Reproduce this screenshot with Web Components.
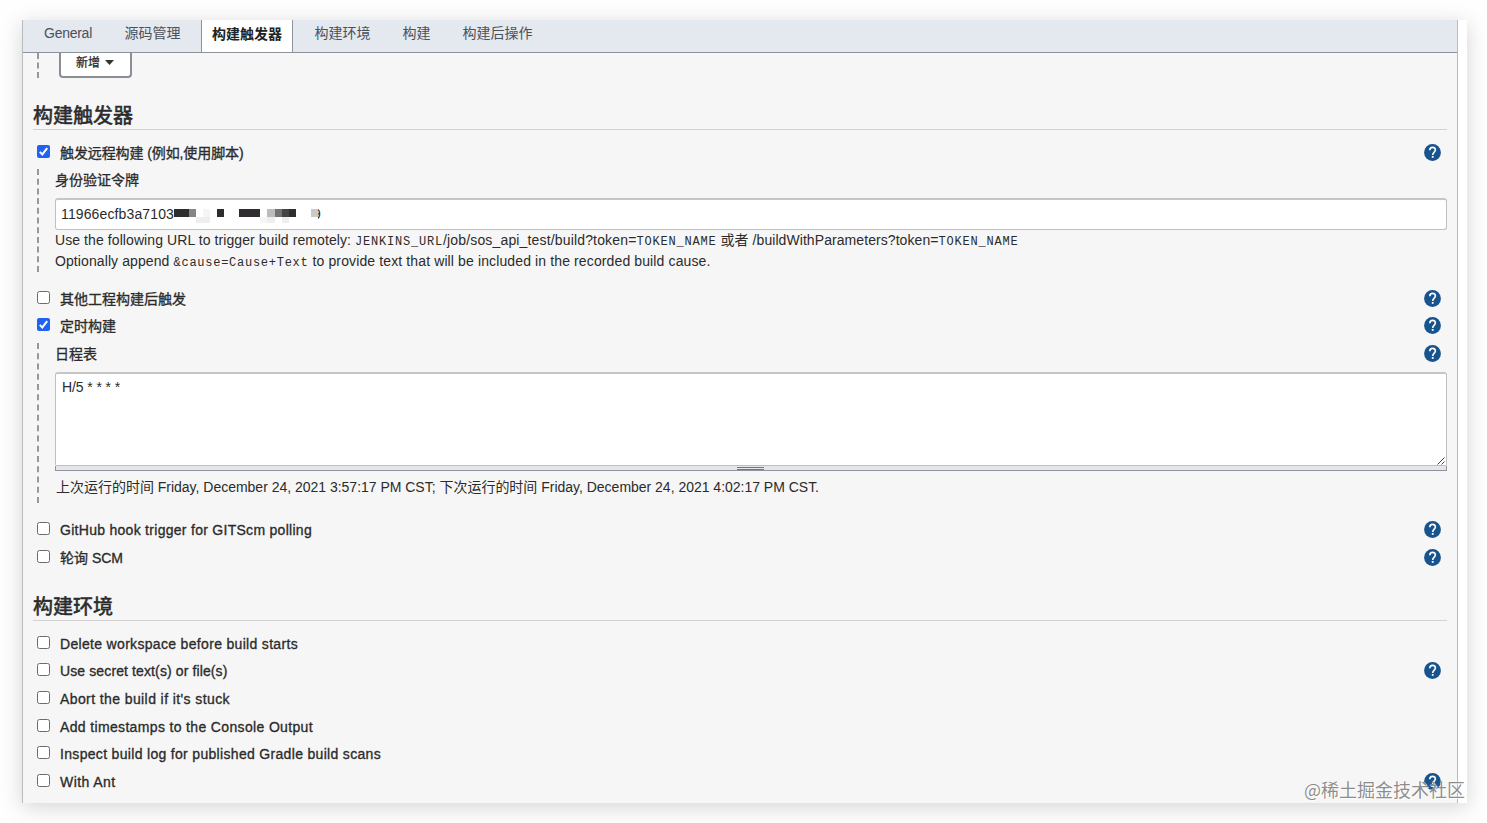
<!DOCTYPE html>
<html lang="zh-CN">
<head>
<meta charset="utf-8">
<title>构建触发器</title>
<style>
html,body{margin:0;height:100%;overflow:hidden;background:#fefefe}
body{font:14px/20px "Liberation Sans","Noto Sans CJK SC",sans-serif;color:#2b2b2b}
</style>
</head>
<body>
<job-config></job-config>
<script>
const define = (name, html, setup) => {
  const t = document.createElement('template');
  t.innerHTML = html;
  customElements.define(name, class extends HTMLElement {
    constructor(){ super(); this.attachShadow({mode:'open'}).append(t.content.cloneNode(true)); }
    connectedCallback(){ if (setup) setup(this, this.shadowRoot); }
  });
};

// Text run tracked so that it fills the width given in its "w" attribute
define('text-run', `<style>:host{display:inline-block;white-space:pre}span{display:inline-block}</style><span><slot></slot></span>`, (el, r) => {
  const w = +el.getAttribute('w'), s = r.querySelector('span');
  if (!w) return;
  el.style.width = w + 'px';
  const n = [...el.textContent].length;
  s.style.letterSpacing = ((w - s.getBoundingClientRect().width) / n) + 'px';
});

define('help-icon', `<style>:host{display:block;width:17px;height:17px;flex:none}svg{display:block}</style>
<svg width="17" height="17" viewBox="0 0 17 17"><circle cx="8.5" cy="8.5" r="8.4" fill="#17538d"/>
<path d="M5.8 6.3C5.8 4.5 7 3.4 8.6 3.4S11.4 4.5 11.4 6.1C11.4 8 8.7 8.3 8.7 10.9" fill="none" stroke="#fff" stroke-width="1.6"/><rect x="7.8" y="12" width="1.8" height="1.8" fill="#fff"/></svg>`);

define('check-box', `<style>:host{display:block;width:13px;height:13px;flex:none}svg{display:block}.on{display:none}:host([checked]) .on{display:block}:host([checked]) .off{display:none}</style>
<svg class="off" width="13" height="13"><rect x=".5" y=".5" width="12" height="12" rx="2" fill="#fff" stroke="#6b6b6b"/></svg>
<svg class="on" width="13" height="13"><rect width="13" height="13" rx="2" fill="#1f63f0"/><path d="M2.8 6.9 5.3 9.4 10.2 3.2" fill="none" stroke="#fff" stroke-width="2"/></svg>`);

define('option-row', `<style>
:host{display:flex;height:27px;box-sizing:border-box;padding:0 16px 0 14px;align-items:flex-start}
check-box{margin-top:7px}
.label{margin:5px 0 0 10px;line-height:20px;-webkit-text-stroke:.32px #2b2b2b;flex:1}
help-icon{margin-top:6px;display:none}
:host([help]) help-icon{display:block}
</style><check-box></check-box><div class="label"><slot></slot></div><help-icon></help-icon>`, (el, r) => {
  r.querySelector('check-box').toggleAttribute('checked', el.hasAttribute('checked'));
});

define('section-title', `<style>:host{display:block;box-sizing:border-box;height:30px;margin:0 10px 8px;border-bottom:1px solid #d2d2d2;font-size:20px;line-height:32px;-webkit-text-stroke:.6px #2b2b2b}</style><slot></slot>`);

define('tab-item', `<style>
:host{display:block;flex:none;height:32px;line-height:27px;color:#4b515b;box-sizing:border-box}
:host([active]){background:#fff;border:solid #8d929b;border-width:0 1px;padding:0 10px;line-height:29px;color:#222;font-weight:700}
</style><slot></slot>`);

define('nested-block', `<style>:host{display:block;box-sizing:border-box;border-left:2px dashed #989898;margin:0 10px 0 14px;padding-left:16px}</style><slot></slot>`);

define('token-field', `<style>
:host{display:block;box-sizing:border-box;height:32px;border:1px solid #bfbfbf;border-top:2px solid #c6c6c6;border-radius:3px;background:#fff;padding-left:5px;line-height:29px;position:relative}
.nine{position:absolute;left:257px;top:0}
svg{position:absolute;left:118px;top:8px}
</style><slot></slot><span class="nine">9</span>
<svg width="152" height="18" shape-rendering="crispEdges">
<g fill="#2f2d2f"><rect x="0" y="1" width="15" height="8"/><rect x="43" y="1" width="7" height="8"/><rect x="65" y="1" width="21" height="8"/><rect x="108" y="1" width="14" height="8" fill="#444"/><rect x="115" y="1" width="7" height="8"/></g>
<g fill="#eee"><rect x="22" y="9" width="14" height="6"/><rect x="29" y="1" width="7" height="8" fill="#f5f5f5"/><rect x="86" y="9" width="7" height="6" fill="#f5f5f5"/><rect x="93" y="9" width="8" height="6"/><rect x="108" y="9" width="7" height="6"/></g>
<rect x="15" y="1" width="7" height="8" fill="#858585"/><rect x="93" y="1" width="8" height="8" fill="#bcbcbc"/><rect x="101" y="1" width="7" height="8" fill="#747274"/>
<rect x="136" y="0" width="8" height="16" fill="#fff"/><rect x="137" y="1" width="7" height="8" fill="#c9c9c9"/>
</svg>`);

define('schedule-area', `<style>
:host{display:block}
.box{box-sizing:border-box;height:94px;border:1px solid #bfbfbf;border-top:2px solid #c6c6c6;border-radius:3px 3px 2px 2px;background:#fff;padding:3px 6px;display:flex;justify-content:space-between}
.box svg{align-self:flex-end;margin:0 -5px -3px 0}
.bar{box-sizing:border-box;height:5px;background:#e4e6e9;border:1px solid #8f959d;border-top:0;display:flex;justify-content:center}
.grip{box-sizing:border-box;flex:none;width:27px;height:3px;border:solid #777;border-width:1px 0;margin:1px 2px 0 0}
</style><div class="box"><div><slot></slot></div><svg width="8" height="8" viewBox="0 0 8 8"><path d="M.5 7.5 7.5.5M4.5 7.5 7.5 4.5" stroke="#444" fill="none"/></svg></div><div class="bar"><div class="grip"></div></div>`);

define('menu-button', `<style>:host{display:flex;box-sizing:border-box;width:73px;height:25px;border:2px solid #8a8f96;border-top:0;border-radius:0 0 4px 4px;background:#fff;font-size:12px;line-height:20px;padding-left:15px;gap:5px;-webkit-text-stroke:.25px #2b2b2b}svg{margin-top:7px}</style><slot></slot><svg width="9" height="5"><path d="M0 0H9L4.5 5Z" fill="#333"/></svg>`);

define('water-mark', `<style>:host{display:block;position:absolute;left:1304px;top:776px;font:18px/26px "Noto Sans CJK SC",sans-serif;color:rgba(120,120,120,.85);text-shadow:0 0 1px #fff,1px 1px 0 rgba(255,255,255,.8);white-space:nowrap}</style><slot></slot>`);

define('job-config', `<style>
:host{display:block;padding:20px 20px 20px 22px;height:783px}
.card{width:1445px;height:783px;background:#fff;box-shadow:0 4px 20px rgba(0,0,0,.17)}
.pane{box-sizing:border-box;width:1436px;height:783px;border:solid #b9bbbe;border-width:0 1px;background:#f6f6f6;display:flex;flex-direction:column}
.tabs{display:flex;height:33px;box-sizing:border-box;flex:none;background:#e4e8ef;border-bottom:1px solid #8d929b}
.top{display:flex;height:25px;margin:0 0 22px 14px;flex:none}
.rail{border-left:2px dashed #989898;width:20px}
.b1{height:103px;margin-top:4px;margin-bottom:12px}
.b2{height:160px;margin-top:5px;margin-bottom:12px}
.strong{-webkit-text-stroke:.3px #2b2b2b}
.lab{display:flex;justify-content:space-between;height:29px;line-height:22px}
.b2 .lab{padding-right:6px}
.note{line-height:21px;white-space:nowrap;height:21px;display:flex;align-items:baseline}
code{font-family:"Liberation Mono",monospace;font-size:12px}
option-row,section-title,nested-block{flex:none}
.g{margin-bottom:1px}
</style>
<div class="card"><div class="pane">
<div class="tabs">
<tab-item style="margin-left:21px"><text-run w="48">General</text-run></tab-item>
<tab-item style="margin-left:32.5px"><text-run w="56">源码管理</text-run></tab-item>
<tab-item active style="margin-left:20.5px">构建触发器</tab-item>
<tab-item style="margin-left:21.5px">构建环境</tab-item>
<tab-item style="margin-left:32px">构建</tab-item>
<tab-item style="margin-left:32px">构建后操作</tab-item>
</div>
<div class="top"><div class="rail"></div><menu-button>新增</menu-button></div>
<section-title>构建触发器</section-title>
<option-row checked help><text-run w="183.5">触发远程构建 (例如,使用脚本)</text-run></option-row>
<nested-block class="b1">
<div class="lab strong">身份验证令牌</div>
<token-field><text-run w="113">11966ecfb3a7103</text-run></token-field>
<div class="note"><text-run w="300">Use the following URL to trigger build remotely: </text-run><code><text-run w="88">JENKINS_URL</text-run></code><text-run w="193.5">/job/sos_api_test/build?token=</text-run><code><text-run w="80">TOKEN_NAME</text-run></code><text-run w="222"> 或者 /buildWithParameters?token=</text-run><code><text-run w="80">TOKEN_NAME</text-run></code></div>
<div class="note"><text-run w="118.5">Optionally append </text-run><code><text-run w="135">&amp;cause=Cause+Text</text-run></code><text-run w="402"> to provide text that will be included in the recorded build cause.</text-run></div>
</nested-block>
<option-row help>其他工程构建后触发</option-row>
<option-row checked help>定时构建</option-row>
<nested-block class="b2">
<div class="lab"><span class="strong">日程表</span><help-icon style="margin-top:2px"></help-icon></div>
<schedule-area><text-run w="58">H/5 * * * *</text-run></schedule-area>
<div class="note" style="margin:6px 0 0 1px"><text-run w="763">上次运行的时间 Friday, December 24, 2021 3:57:17 PM CST; 下次运行的时间 Friday, December 24, 2021 4:02:17 PM CST.</text-run></div>
</nested-block>
<option-row help class="g"><text-run w="252">GitHub hook trigger for GITScm polling</text-run></option-row>
<option-row help><text-run w="63">轮询 SCM</text-run></option-row>
<section-title style="margin-top:21px">构建环境</section-title>
<option-row><text-run w="238">Delete workspace before build starts</text-run></option-row>
<option-row help class="g"><text-run w="167.5">Use secret text(s) or file(s)</text-run></option-row>
<option-row class="g"><text-run w="170">Abort the build if it's stuck</text-run></option-row>
<option-row><text-run w="253">Add timestamps to the Console Output</text-run></option-row>
<option-row class="g"><text-run w="321">Inspect build log for published Gradle build scans</text-run></option-row>
<option-row help><text-run w="55.5">With Ant</text-run></option-row>
</div></div>
<water-mark>@稀土掘金技术社区</water-mark>`);
</script>
</body>
</html>
